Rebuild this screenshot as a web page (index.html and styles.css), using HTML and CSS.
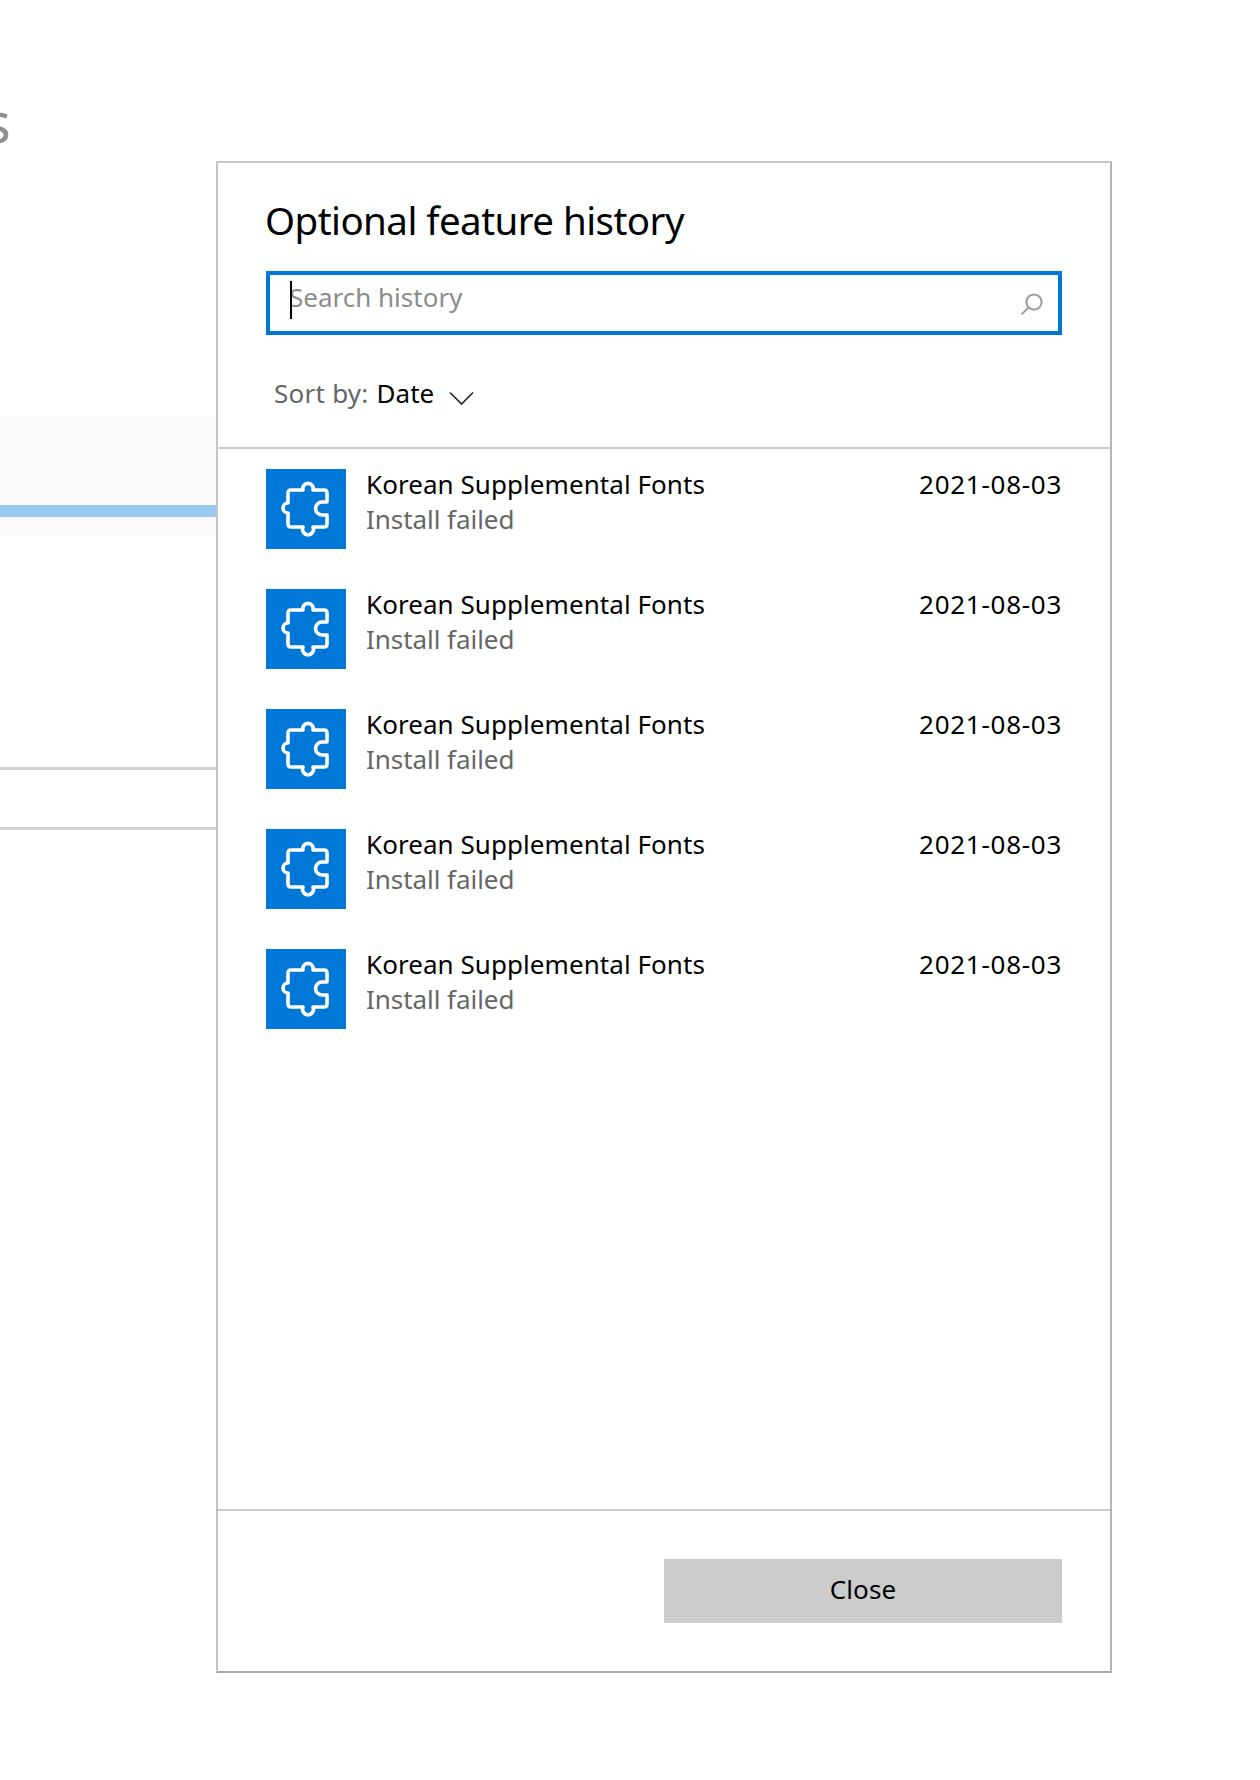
FILE: index.html
```html
<!DOCTYPE html>
<html lang="en">
<head>
<meta charset="utf-8">
<title>Optional feature history</title>
<link rel="stylesheet" href="styles.css">
</head>
<body>
<main class="backdrop">
  <div class="clipped-title">s</div>
  <div class="progress-band"><div class="progress-bar"></div></div>
  <div class="rule rule-first"></div>
  <div class="rule rule-second"></div>
</main>
<section class="dialog">
  <header class="dialog-head">
    <h1 class="dialog-title">Optional feature history</h1>
    <div class="search">
      <span class="caret"></span>
      <span class="placeholder">Search history</span>
      <svg class="search-icon" width="26" height="26" viewBox="0 0 26 26"><circle cx="15" cy="10" r="7.6"/><path d="M9.6 15.4 2.6 22.4"/></svg>
    </div>
    <div class="sort">
      <span class="sort-label">Sort by:</span>
      <span class="sort-value">Date</span>
      <svg class="chevron" width="25" height="14" viewBox="0 0 25 14"><path d="M1 1.5 12.5 13 24 1.5"/></svg>
    </div>
  </header>
  <ul class="list">
    <li class="item">
      <span class="tile"><svg width="80" height="80" viewBox="0 0 80 80"><path d="M37 21a5.2 5.2 0 1 1 10 0H58q3 0 3 3V33H56a6.5 6.5 0 0 0 0 13H61V55q0 3-3 3H47a5.5 5.5 0 1 1-10 0H25q-3 0-3-3V44a5 5 0 0 1 0-10V24q0-3 3-3Z"/></svg></span>
      <div class="item-text"><div class="item-name">Korean Supplemental Fonts</div><div class="item-status">Install failed</div></div>
      <div class="item-date">2021-08-03</div>
    </li>
    <li class="item">
      <span class="tile"><svg width="80" height="80" viewBox="0 0 80 80"><path d="M37 21a5.2 5.2 0 1 1 10 0H58q3 0 3 3V33H56a6.5 6.5 0 0 0 0 13H61V55q0 3-3 3H47a5.5 5.5 0 1 1-10 0H25q-3 0-3-3V44a5 5 0 0 1 0-10V24q0-3 3-3Z"/></svg></span>
      <div class="item-text"><div class="item-name">Korean Supplemental Fonts</div><div class="item-status">Install failed</div></div>
      <div class="item-date">2021-08-03</div>
    </li>
    <li class="item">
      <span class="tile"><svg width="80" height="80" viewBox="0 0 80 80"><path d="M37 21a5.2 5.2 0 1 1 10 0H58q3 0 3 3V33H56a6.5 6.5 0 0 0 0 13H61V55q0 3-3 3H47a5.5 5.5 0 1 1-10 0H25q-3 0-3-3V44a5 5 0 0 1 0-10V24q0-3 3-3Z"/></svg></span>
      <div class="item-text"><div class="item-name">Korean Supplemental Fonts</div><div class="item-status">Install failed</div></div>
      <div class="item-date">2021-08-03</div>
    </li>
    <li class="item">
      <span class="tile"><svg width="80" height="80" viewBox="0 0 80 80"><path d="M37 21a5.2 5.2 0 1 1 10 0H58q3 0 3 3V33H56a6.5 6.5 0 0 0 0 13H61V55q0 3-3 3H47a5.5 5.5 0 1 1-10 0H25q-3 0-3-3V44a5 5 0 0 1 0-10V24q0-3 3-3Z"/></svg></span>
      <div class="item-text"><div class="item-name">Korean Supplemental Fonts</div><div class="item-status">Install failed</div></div>
      <div class="item-date">2021-08-03</div>
    </li>
    <li class="item">
      <span class="tile"><svg width="80" height="80" viewBox="0 0 80 80"><path d="M37 21a5.2 5.2 0 1 1 10 0H58q3 0 3 3V33H56a6.5 6.5 0 0 0 0 13H61V55q0 3-3 3H47a5.5 5.5 0 1 1-10 0H25q-3 0-3-3V44a5 5 0 0 1 0-10V24q0-3 3-3Z"/></svg></span>
      <div class="item-text"><div class="item-name">Korean Supplemental Fonts</div><div class="item-status">Install failed</div></div>
      <div class="item-date">2021-08-03</div>
    </li>
  </ul>
  <footer class="dialog-foot">
    <button class="close" type="button">Close</button>
  </footer>
</section>
</body>
</html>
```
FILE: styles.css
```css
* { box-sizing: border-box; }
html, body { margin: 0; padding: 0; background: #fff; }
body {
  position: relative;
  width: 1260px;
  height: 1780px;
  overflow: hidden;
  font-family: "Noto Sans", "Open Sans", sans-serif;
  color: #000;
}

/* page behind the dialog */
.backdrop { display: flex; flex-direction: column; width: 218px; height: 100%; overflow: hidden; }
.clipped-title {
  height: 60px;
  margin-top: 91px;
  margin-left: -16px;
  font-size: 56px;
  line-height: 60px;
  color: #8f8f8f;
}
.progress-band { margin-top: 265px; height: 120px; padding-top: 89px; background: #f9f9f9; }
.progress-bar { height: 12px; background: #99c9ef; }
.rule { height: 3px; background: #d2d2d2; }
.rule-first { margin-top: 231px; }
.rule-second { margin-top: 57px; }

/* dialog */
.dialog {
  position: absolute;
  left: 216px;
  top: 161px;
  width: 896px;
  height: 1512px;
  display: flex;
  flex-direction: column;
  background: #fff;
  border: 2px solid;
  border-color: #c8c8c8 #b4b4b4 #a8a8a8 #c4c4c4;
}
.dialog-head {
  height: 286px;
  padding: 31px 48px 0;
  border-bottom: 2px solid #cccccc;
}
.dialog-title {
  margin: 0 0 0 -1px;
  font-size: 38.5px;
  font-weight: 400;
  letter-spacing: -0.55px;
  line-height: 52px;
  color: #000;
}
.search {
  position: relative;
  display: flex;
  align-items: center;
  height: 64px;
  margin-top: 25px;
  padding: 0 19px 12px;
  border: 4px solid #0078d7;
}
.caret { position: absolute; left: 20px; top: 6px; width: 2px; height: 38px; background: #000; }
.placeholder { font-size: 26px; line-height: 36px; color: #8c8c8c; }
.search-icon { position: absolute; right: 13px; top: 17px; fill: none; stroke: #999; stroke-width: 2; }
.sort {
  display: flex;
  align-items: center;
  height: 40px;
  margin-top: 38px;
  padding-left: 8px;
  font-size: 26px;
}
.sort-label { color: #666; letter-spacing: 0.25px; }
.sort-value { margin-left: 8px; color: #000; }
.chevron { margin-left: 15px; margin-top: 10px; fill: none; stroke: #222; stroke-width: 1.6; }

/* list */
.list {
  flex: 1;
  margin: 0;
  padding: 20px 48px 0;
  list-style: none;
  display: flex;
  flex-direction: column;
  gap: 40px;
}
.item { display: flex; align-items: flex-start; height: 80px; }
.tile { flex: none; width: 80px; height: 80px; background: #0078d7; }
.tile svg { display: block; fill: none; stroke: #fff; stroke-width: 3.6; stroke-linejoin: round; }
.item-text { flex: 1; margin-left: 20px; font-size: 26px; line-height: 34px; margin-top: -2px; }
.item-name { color: #000; letter-spacing: 0.06px; }
.item-status { margin-top: 1px; color: #666; letter-spacing: -0.05px; }
.item-date { font-size: 26px; line-height: 34px; margin-top: -2px; color: #000; letter-spacing: 0.72px; }

/* footer */
.dialog-foot {
  height: 162px;
  padding: 48px 48px 0;
  display: flex;
  justify-content: flex-end;
  align-items: flex-start;
  border-top: 2px solid #cccccc;
}
.close {
  width: 398px;
  height: 64px;
  border: 0;
  padding: 0 0 4px;
  background: #cccccc;
  color: #000;
  font-family: inherit;
  font-size: 26px;
  letter-spacing: 0.1px;
}
```
